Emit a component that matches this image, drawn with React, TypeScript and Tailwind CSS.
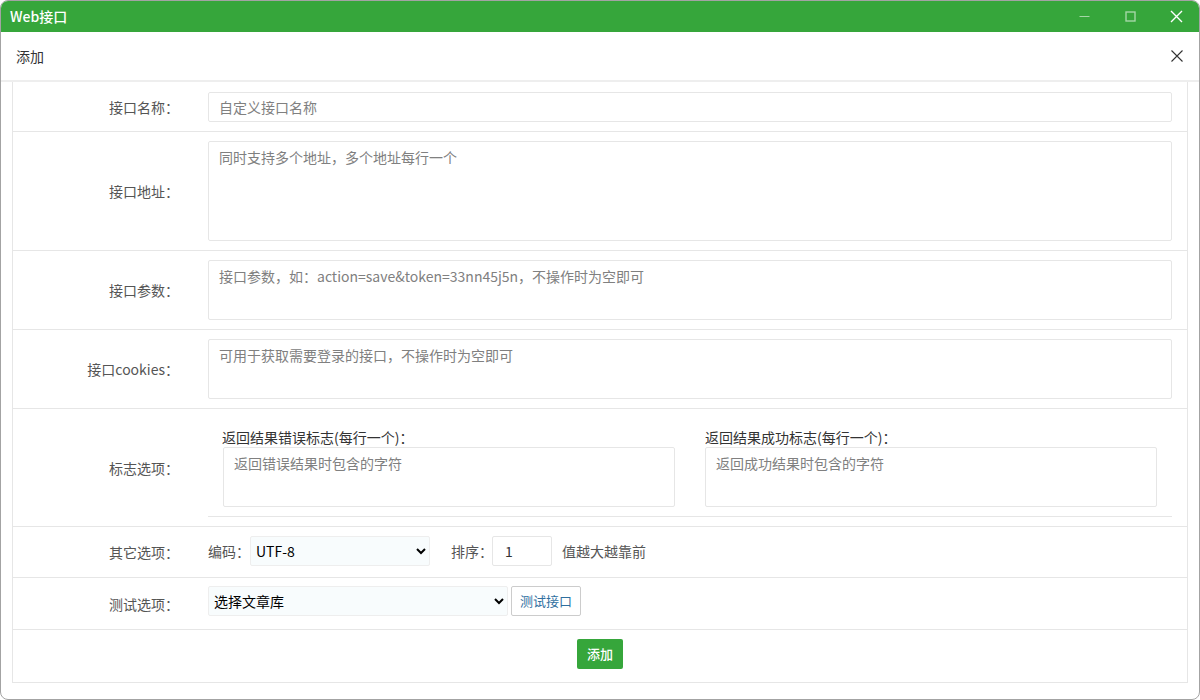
import React from 'react';

const font = { fontFamily: '"Noto Sans CJK SC", "Noto Sans", sans-serif' };

function Row({ label, children, className = '' }: { label: string; children: React.ReactNode; className?: string }) {
  return (
    <div className="flex border-b border-[#e6e6e6]">
      <div className="w-[166px] flex items-center justify-end text-[14px] leading-[20px] text-[#555] shrink-0">
        {label}：
      </div>
      <div className={`flex-1 pl-[29px] pr-[15px] ${className}`}>{children}</div>
    </div>
  );
}

const boxCls =
  'block w-full border border-[#e6e6e6] rounded-[2px] bg-white pl-[10px] pr-[10px] text-[14px] text-[#333] placeholder:text-[#808080] outline-none resize-none';

export default function App() {
  return (
    <div style={font} className="w-[1200px] h-[700px] bg-white">
      <div className="w-full h-full flex flex-col border border-[#a3a3a3] rounded-[8px] overflow-hidden bg-white">
        {/* title bar */}
        <div className="h-[31px] bg-[#36a63b] flex items-center pl-[9px] text-white text-[14px] shrink-0">
          <span className="font-medium">Web接口</span>
          <div className="ml-auto flex items-center h-full">
            <div className="w-[46px] h-full flex items-center justify-center">
              <svg width="11" height="11" viewBox="0 0 11 11">
                <path d="M0.5 5.5h10" stroke="rgba(255,255,255,0.55)" strokeWidth="1.2" />
              </svg>
            </div>
            <div className="w-[46px] h-full flex items-center justify-center">
              <svg width="11" height="11" viewBox="0 0 11 11">
                <rect x="1" y="1" width="9" height="9" fill="none" stroke="rgba(255,255,255,0.55)" strokeWidth="1.4" />
              </svg>
            </div>
            <div className="w-[46px] h-full flex items-center justify-center">
              <svg width="13" height="13" viewBox="0 0 13 13">
                <path d="M1 1l11 11M12 1L1 12" stroke="#fff" strokeWidth="1.4" />
              </svg>
            </div>
          </div>
        </div>

        {/* dialog header */}
        <div className="h-[50px] border-b-[2px] border-[#eeeeee] flex items-center justify-between pl-[15px] pr-[16px] shrink-0">
          <span className="text-[14px] text-[#333]">添加</span>
          <svg width="12" height="12" viewBox="0 0 12 12">
            <path d="M0.5 0.5l11 11M11.5 0.5l-11 11" stroke="#333" strokeWidth="1.1" />
          </svg>
        </div>

        {/* form */}
        <div className="pl-[11px] pr-[11px]">
          <div className="border-x border-[#e6e6e6]">
            <Row label="接口名称" className="pt-[10px] pb-[9px]">
              <input className={`${boxCls} h-[30px]`} placeholder="自定义接口名称" />
            </Row>
            <Row label="接口地址" className="pt-[9px] pb-[9px]">
              <textarea className={`${boxCls} h-[100px] py-[5px] leading-[20px]`} placeholder="同时支持多个地址，多个地址每行一个" />
            </Row>
            <Row label="接口参数" className="pt-[9px] pb-[9px]">
              <textarea
                className={`${boxCls} h-[60px] py-[5px] leading-[20px]`}
                placeholder="接口参数，如：action=save&token=33nn45j5n，不操作时为空即可"
              />
            </Row>
            <Row label="接口cookies" className="pt-[9px] pb-[9px]">
              <textarea className={`${boxCls} h-[60px] py-[5px] leading-[20px]`} placeholder="可用于获取需要登录的接口，不操作时为空即可" />
            </Row>
            <Row label="标志选项" className="pt-[19px] pb-[9px]">
              <div className="border-b border-[#e6e6e6] pb-[9px]">
                <div className="grid grid-cols-2 gap-[30px] px-[15px]">
                  <div>
                    <div className="text-[14px] leading-[19px] text-[#333] -ml-[1px]">返回结果错误标志(每行一个)：</div>
                    <textarea className={`${boxCls} h-[60px] py-[5px] leading-[20px]`} placeholder="返回错误结果时包含的字符" />
                  </div>
                  <div>
                    <div className="text-[14px] leading-[19px] text-[#333]">返回结果成功标志(每行一个)：</div>
                    <textarea className={`${boxCls} h-[60px] py-[5px] leading-[20px]`} placeholder="返回成功结果时包含的字符" />
                  </div>
                </div>
              </div>
            </Row>
            <Row label="其它选项" className="pt-[9px] pb-[11px]">
              <div className="flex items-center text-[14px] text-[#555] whitespace-nowrap">
                <span className="w-[42px] shrink-0">编码：</span>
                <select className="w-[180px] h-[30px] border border-[#eeeeee] rounded-[2px] bg-[#f8fcfd] text-[14px] text-black pl-[1px] outline-none">
                  <option>UTF-8</option>
                  <option>GBK</option>
                </select>
                <span className="ml-[21px] w-[41px] shrink-0">排序：</span>
                <input defaultValue="1" className="w-[60px] h-[30px] border border-[#e6e6e6] rounded-[2px] bg-white pl-[12px] text-[14px] text-[#333] outline-none" />
                <span className="ml-[10px]">值越大越靠前</span>
              </div>
            </Row>
            <Row label="测试选项" className="pt-[8px] pb-[13px]">
              <div className="flex items-center gap-[3px]">
                <select className="w-[300px] h-[30px] border border-[#eeeeee] rounded-[2px] bg-[#f8fcfd] text-[14px] text-black pl-[1px] outline-none">
                  <option>选择文章库</option>
                </select>
                <button className="w-[70px] h-[30px] border border-[#cccccc] rounded-[2px] bg-white text-[13px] text-[#2f6f9f]">
                  测试接口
                </button>
              </div>
            </Row>
            <div className="flex justify-center border-b border-[#e6e6e6] pt-[9px] pb-[13px]">
              <button className="w-[46px] h-[30px] rounded-[2px] bg-[#36a63b] text-white text-[13px] font-medium">添加</button>
            </div>
          </div>
        </div>
      </div>
    </div>
  );
}
